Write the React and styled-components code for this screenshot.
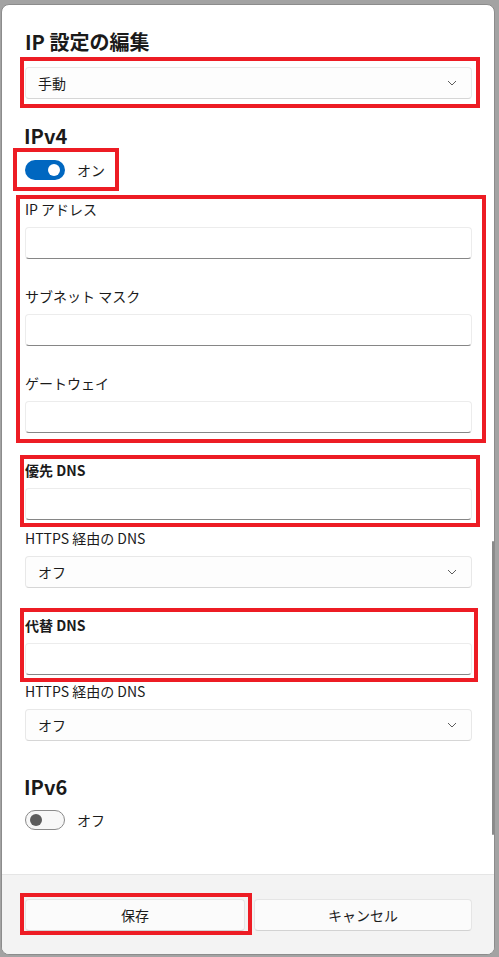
import React from "react";
import styled, { createGlobalStyle } from "styled-components";

const Global = createGlobalStyle`
  html, body { margin: 0; padding: 0; }
  body {
    background: #a3a3a3;
    font-family: "Noto Sans CJK JP", "Noto Sans", sans-serif;
    color: #1b1b1b;
    width: 499px;
    height: 957px;
    overflow: hidden;
  }
  *, *::before, *::after { box-sizing: border-box; }
`;

const Dialog = styled.div`
  margin: 4px 4px 0 1px;
  width: 494px;
  height: 951px;
  background: #ffffff;
  border: 1px solid #8c8c8c;
  border-radius: 8px;
  overflow: hidden;
  display: flex;
  flex-direction: column;
`;

const Content = styled.div`
  position: relative;
  flex: 1;
  padding: 23px 22px 0 23px;
  display: flex;
  flex-direction: column;
`;

const Block = styled.div`
  position: relative;
  margin-top: ${(p) => p.$mt || 0}px;
  align-self: ${(p) => (p.$fit ? "flex-start" : "stretch")};
`;

const Annot = styled(Block)`
  &::after {
    content: "";
    position: absolute;
    box-sizing: border-box;
    top: ${(p) => p.$box[0]}px;
    left: ${(p) => p.$box[1]}px;
    width: ${(p) => p.$box[2]}px;
    height: ${(p) => p.$box[3]}px;
    border: 4px solid #ed1c24;
    pointer-events: none;
  }
`;

const Title = styled.h1`
  margin: 0;
  font-size: 20px;
  line-height: 28px;
  font-weight: 600;
  color: #1a1a1a;
`;

const Heading = styled.h2`
  margin: ${(p) => p.$mt}px 0 0 -1px;
  font-size: 20px;
  line-height: 28px;
  font-weight: 600;
  color: #1a1a1a;
`;

const SelectBox = styled.div`
  height: 32px;
  background: #fdfdfd;
  border: 1px solid #e8e8e8;
  border-bottom-color: #d6d6d6;
  border-radius: 4px;
  display: flex;
  align-items: center;
  justify-content: space-between;
  padding: 0 14px 0 12px;
  font-size: 14px;
  color: #1b1b1b;
`;

const Field = styled.div`
  display: flex;
  flex-direction: column;
  gap: 8px;
  margin-top: ${(p) => p.$mt || 0}px;
`;

const Label = styled.div`
  font-size: 14px;
  line-height: 20px;
  font-weight: ${(p) => (p.$bold ? 700 : 400)};
  color: #1b1b1b;
`;

const Input = styled.div`
  height: 32px;
  background: #ffffff;
  border: 1px solid #ececec;
  border-bottom: 1px solid #868686;
  border-radius: 4px;
`;

const ToggleRow = styled.div`
  display: flex;
  align-items: center;
  gap: 12px;
  font-size: 14px;
  line-height: 20px;
  margin-top: ${(p) => p.$mt || 0}px;
`;

const Track = styled.div`
  width: 40px;
  height: 20px;
  border-radius: 10px;
  display: flex;
  align-items: center;
  padding: 0 ${(p) => (p.$on ? 5 : 4)}px;
  justify-content: ${(p) => (p.$on ? "flex-end" : "flex-start")};
  background: ${(p) => (p.$on ? "#0067c0" : "#f7f7f7")};
  border: ${(p) => (p.$on ? "none" : "1px solid #8a8a8a")};
`;

const Knob = styled.div`
  width: 12px;
  height: 12px;
  border-radius: 50%;
  background: ${(p) => (p.$on ? "#ffffff" : "#5d5d5d")};
`;

const Scrollbar = styled.div`
  position: absolute;
  right: 0px;
  top: 536px;
  width: 2px;
  height: 294px;
  border-radius: 1px;
  background: #8a8a8a;
`;

const Footer = styled.div`
  background: #f3f3f3;
  border-top: 1px solid #e5e5e5;
  padding: 24px 22px 23px 23px;
  display: grid;
  grid-template-columns: 220px 1fr;
  gap: 9px;
`;

const Button = styled.div`
  height: 32px;
  background: #fbfbfb;
  border: 1px solid #e5e5e5;
  border-bottom-color: #d2d2d2;
  border-radius: 4px;
  display: flex;
  align-items: center;
  justify-content: center;
  font-size: 14px;
  color: #1b1b1b;
`;

const Chevron = () => (
  <svg width="10" height="6" viewBox="0 0 10 6">
    <path d="M1 1 L5 5 L9 1" fill="none" stroke="#5d5d5d" strokeWidth="1" />
  </svg>
);

const Select = ({ children }) => (
  <SelectBox>
    <span>{children}</span>
    <Chevron />
  </SelectBox>
);

const Toggle = ({ on, text, mt }) => (
  <ToggleRow $mt={mt}>
    <Track $on={on}>
      <Knob $on={on} />
    </Track>
    <span>{text}</span>
  </ToggleRow>
);

export default function App() {
  return (
    <>
      <Global />
      <Dialog>
        <Content>
          <Title>IP 設定の編集</Title>
          <Annot $mt={11} $box={[-10, -5, 460, 51]}>
            <Select>手動</Select>
          </Annot>
          <Heading $mt={23}>IPv4</Heading>
          <Annot $mt={10} $fit $box={[-12, -12, 106, 43]}>
            <Toggle on text="オン" />
          </Annot>
          <Annot $mt={19} $box={[-4, -9, 470, 248]}>
            <Field>
              <Label>IP アドレス</Label>
              <Input />
            </Field>
            <Field $mt={27}>
              <Label>サブネット マスク</Label>
              <Input />
            </Field>
            <Field $mt={27}>
              <Label>ゲートウェイ</Label>
              <Input />
            </Field>
          </Annot>
          <Annot $mt={27} $box={[-5, -5, 460, 72]}>
            <Field>
              <Label $bold>優先 DNS</Label>
              <Input />
            </Field>
          </Annot>
          <Field $mt={8}>
            <Label>HTTPS 経由の DNS</Label>
            <Select>オフ</Select>
          </Field>
          <Annot $mt={27} $box={[-7, -5, 458, 74]}>
            <Field>
              <Label $bold>代替 DNS</Label>
              <Input />
            </Field>
          </Annot>
          <Field $mt={6}>
            <Label>HTTPS 経由の DNS</Label>
            <Select>オフ</Select>
          </Field>
          <Heading $mt={32}>IPv6</Heading>
          <Toggle text="オフ" mt={9} />
          <Scrollbar />
        </Content>
        <Footer>
          <Annot $box={[-6, -5, 232, 42]}>
            <Button>保存</Button>
          </Annot>
          <Button>キャンセル</Button>
        </Footer>
      </Dialog>
    </>
  );
}
